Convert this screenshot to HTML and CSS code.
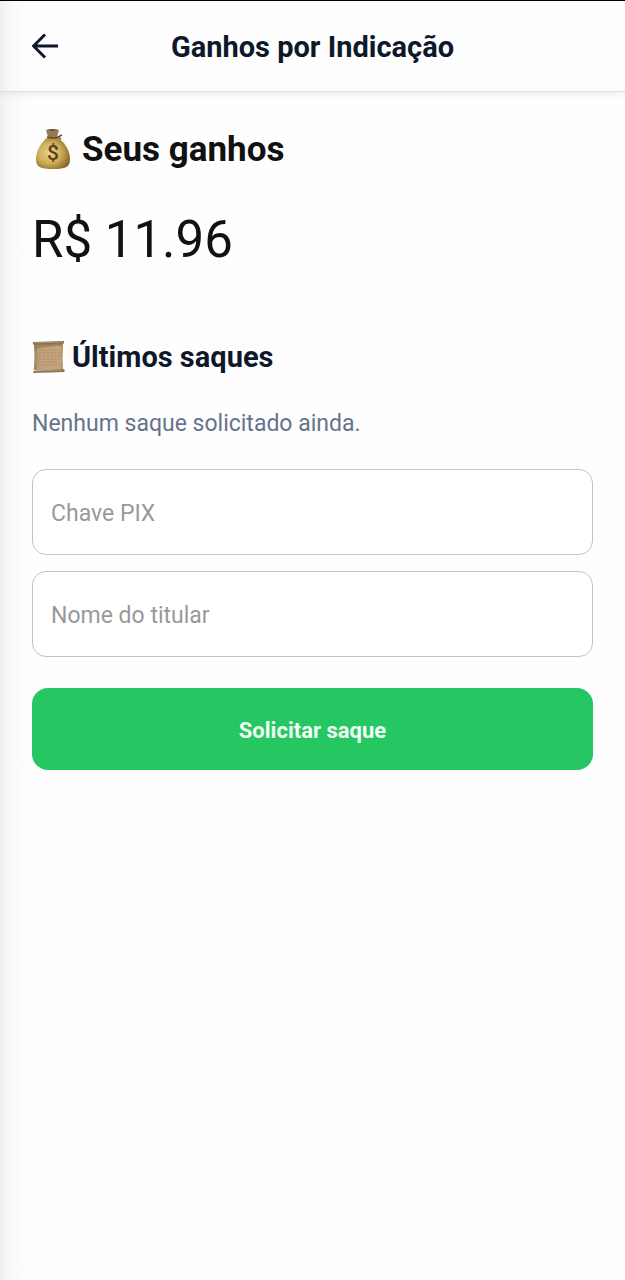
FILE: index.html
```
<!DOCTYPE html>
<html lang="pt-BR">
<head>
  <meta charset="UTF-8" />
  <meta name="viewport" content="width=device-width, initial-scale=1" />
  <title>Ganhos por Indicação</title>
  <link rel="stylesheet" href="styles.css">
</head>
<body>
  <header class="topbar">
    <button type="button" class="back" aria-label="Voltar">
      <svg viewBox="0 0 28 28" fill="none" stroke="#0f172a" stroke-width="3">
        <path d="M26 13H2M13 1.5L1.5 13L13 24.5" />
      </svg>
    </button>
    <h1>Ganhos por Indicação</h1>
  </header>

  <main>
    <h2 class="earnings-title">
      <svg class="bag" viewBox="0 0 42 42" aria-hidden="true">
        <defs>
          <radialGradient id="bagFill" cx="40%" cy="48%" r="62%">
            <stop offset="0" stop-color="#e9d28a" />
            <stop offset="0.55" stop-color="#cfae58" />
            <stop offset="1" stop-color="#8b692b" />
          </radialGradient>
        </defs>
        <path d="M15 9C11 12 4 20 4 30C4 38 8 40 21 40C34 40 38 38 38 30C38 20 31 12 26 9Z" fill="url(#bagFill)" />
        <path d="M14 1Q20 3 27 1L25 8Q20 10 16 8Z" fill="#947a50" />
        <path d="M14 1Q20-1 27 1Q20 3 14 1Z" fill="#5e4a2d" />
        <path d="M15 8Q21 10 26 8L30 6M26 8L29 10" fill="none" stroke="#65502d" stroke-width="1.5" />
        <text x="21" y="31" text-anchor="middle">$</text>
      </svg>
      Seus ganhos
    </h2>
    <p class="amount">R$ 11.96</p>

    <h2 class="history-title">
      <svg class="scroll" viewBox="0 0 34 34" aria-hidden="true">
        <defs>
          <linearGradient id="paper" x1="0" y1="0" x2="1" y2="0">
            <stop offset="0" stop-color="#967958" />
            <stop offset="0.15" stop-color="#c0a07a" />
            <stop offset="0.9" stop-color="#c6a67e" />
            <stop offset="1" stop-color="#a58460" />
          </linearGradient>
        </defs>
        <path d="M2 4H31Q30 18 31 30H2Q3 17 2 4Z" fill="url(#paper)" />
        <path d="M3 4H30V6Q15 6 3 9Z" fill="#8c7253" opacity="0.6" />
        <path d="M6 10H28M6 13H28M6 16H28M6 19H28M6 22H28M6 25H28" stroke="#b18f68" stroke-dasharray="3 1" />
        <path d="M1 2L32 1Q33 3 31 4L2 5Q0 4 1 2Z" fill="#8c7253" />
        <path d="M2 31L31 29Q34 30 32 32L2 33Q0 32 2 31Z" fill="#8c7253" />
        <path d="M2 3L31 2M3 31L31 30" stroke="#ab9070" />
      </svg>
      Últimos saques
    </h2>
    <p class="empty">Nenhum saque solicitado ainda.</p>

    <form>
      <input type="text" name="pix" placeholder="Chave PIX" aria-label="Chave PIX" />
      <input type="text" name="titular" placeholder="Nome do titular" aria-label="Nome do titular" />
      <button type="submit" class="submit">Solicitar saque</button>
    </form>
  </main>
</body>
</html>
```
FILE: styles.css
```
* {
  box-sizing: border-box;
}

body {
  margin: 0;
  min-height: 100vh;
  /* soft shade along the left edge */
  background: linear-gradient(90deg, #efefef, #f9f9f9 10px, #fefefe 28px);
  font-family: Roboto, sans-serif;
  color: #111;
}

h1, h2, p {
  margin: 0;
}

.topbar {
  display: grid;
  grid-template-columns: 28px 1fr 28px;
  align-items: center;
  height: 92px;
  padding: 2px 32px 0;
  border-top: 1px solid #000;
  border-bottom: 1px solid #dedede;
  box-shadow: 0 2px 8px rgba(0, 0, 0, 0.08);
}

.back {
  padding: 0;
  border: none;
  background: none;
  cursor: pointer;
}

.back svg {
  display: block;
  width: 28px;
  height: 28px;
}

h1 {
  font-size: 29px;
  line-height: 36px;
  text-align: center;
  color: #0f172a;
}

main {
  padding: 34px 32px;
}

h2 {
  display: flex;
  align-items: center;
}

.earnings-title {
  gap: 8px;
  font-size: 35px;
  line-height: 48px;
}

.bag {
  width: 42px;
  height: 42px;
}

.bag text {
  font-size: 21px;
  font-weight: 500;
  fill: #59401a;
}

.amount {
  margin-top: 34px;
  font-size: 51px;
  line-height: 64px;
}

.history-title {
  gap: 6px;
  margin-top: 67px;
  font-size: 29px;
  line-height: 36px;
  color: #0f172a;
}

.scroll {
  width: 34px;
  height: 34px;
}

.empty {
  margin-top: 33px;
  font-size: 23px;
  line-height: 32px;
  color: #64748b;
}

form {
  display: flex;
  flex-direction: column;
  gap: 16px;
  margin-top: 29px;
}

input {
  width: 100%;
  height: 86px;
  padding: 2px 18px 0;
  border: 1px solid #c4c4c4;
  border-radius: 14px;
  background: #fff;
  font: 23px Roboto, sans-serif;
}

input::placeholder {
  color: #999;
}

.submit {
  height: 82px;
  margin-top: 15px;
  padding-top: 4px;
  border: none;
  border-radius: 16px;
  background: #26c662;
  color: #f0fff4;
  font: bold 22px Roboto, sans-serif;
  cursor: pointer;
}
```
